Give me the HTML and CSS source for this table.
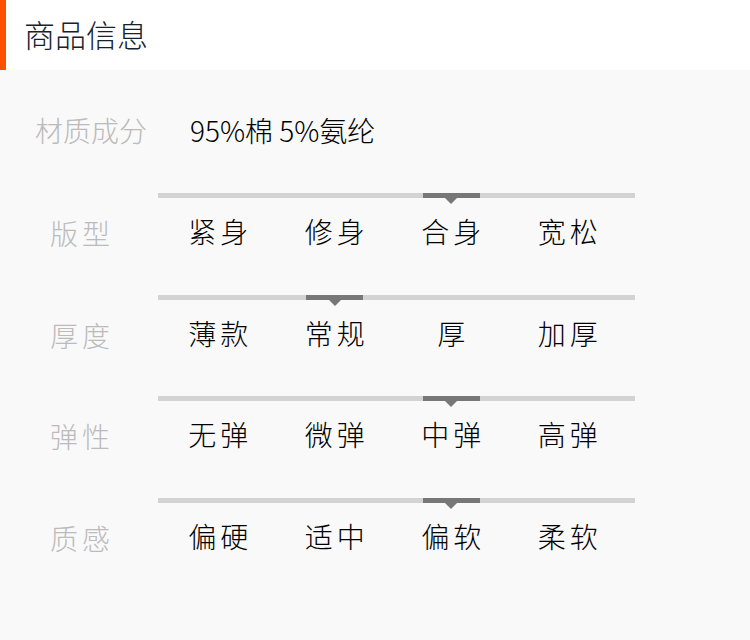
FILE: index.html
```html
<!DOCTYPE html>
<html lang="zh">
<head>
<meta charset="utf-8">
<link rel="stylesheet" href="styles.css">
</head>
<body>
<div class="page">
  <header class="head"><h1 class="title">商品信息</h1></header>
  <main class="content">
    <div class="info">
      <span class="info-label">材质成分</span>
      <span class="info-value">95%棉 5%氨纶</span>
    </div>

    <div class="attr">
      <div class="attr-label">版型</div>
      <div class="attr-body">
        <div class="track"><span></span><span></span><span class="on"><i></i></span><span></span></div>
        <div class="opts"><span>紧身</span><span>修身</span><span>合身</span><span>宽松</span></div>
      </div>
    </div>

    <div class="attr">
      <div class="attr-label">厚度</div>
      <div class="attr-body">
        <div class="track"><span></span><span class="on"><i></i></span><span></span><span></span></div>
        <div class="opts"><span>薄款</span><span>常规</span><span>厚</span><span>加厚</span></div>
      </div>
    </div>

    <div class="attr">
      <div class="attr-label">弹性</div>
      <div class="attr-body">
        <div class="track"><span></span><span></span><span class="on"><i></i></span><span></span></div>
        <div class="opts"><span>无弹</span><span>微弹</span><span>中弹</span><span>高弹</span></div>
      </div>
    </div>

    <div class="attr">
      <div class="attr-label">质感</div>
      <div class="attr-body">
        <div class="track"><span></span><span></span><span class="on"><i></i></span><span></span></div>
        <div class="opts"><span>偏硬</span><span>适中</span><span>偏软</span><span>柔软</span></div>
      </div>
    </div>
  </main>
</div>
</body>
</html>
```

FILE: styles.css
```css
html, body {
  margin: 0;
  padding: 0;
}
body {
  width: 750px;
  height: 640px;
  overflow: hidden;
  background: #f9f9f9;
  font-family: "Noto Sans CJK SC", "Noto Sans", sans-serif;
  font-weight: 300;
}
.page {
  width: 750px;
}
.head {
  height: 70px;
  background: #ffffff;
  border-left: 6px solid #ff5000;
  box-sizing: border-box;
  display: flex;
  align-items: center;
  padding-left: 18px;
}
.title {
  margin: 0;
  font-size: 31px;
  font-weight: 300;
  color: #15222c;
  line-height: 40px;
  position: relative;
  top: -1px;
}
.content {
  padding-top: 40px;
}
.info {
  display: flex;
  align-items: center;
  height: 40px;
  font-size: 28px;
  line-height: 40px;
}
.info-label {
  width: 190px;
  padding-left: 35px;
  box-sizing: border-box;
  color: #bbbbbb;
}
.info-value {
  color: #000000;
}
.attr {
  display: flex;
  margin-top: 43px;
}
.attr + .attr {
  margin-top: 41.5px;
}
.attr-label {
  width: 158px;
  box-sizing: border-box;
  padding-left: 50px;
  align-self: flex-end;
  font-size: 28px;
  line-height: 40px;
  letter-spacing: 4px;
  color: #bbbbbb;
}
.attr-body {
  width: 477px;
}
.track {
  height: 5px;
  background: #d3d3d3;
  display: grid;
  grid-template-columns: repeat(4, 116.5px);
  padding-left: 2px;
}
.track span {
  display: flex;
  justify-content: center;
}
.track .on i {
  position: relative;
  display: block;
  width: 57px;
  height: 5px;
  background: #777777;
}
.track .on i::after {
  content: "";
  position: absolute;
  left: 50%;
  top: 5px;
  margin-left: -6px;
  border-left: 6px solid transparent;
  border-right: 6px solid transparent;
  border-top: 6px solid #777777;
}
.opts {
  display: grid;
  grid-template-columns: repeat(4, 116.5px);
  padding-left: 2px;
  margin-top: 13px;
  margin-bottom: 2px;
}
.opts span {
  text-align: center;
  font-size: 28px;
  line-height: 40px;
  letter-spacing: 4px;
  padding-left: 4px;
  color: #000000;
}
```
